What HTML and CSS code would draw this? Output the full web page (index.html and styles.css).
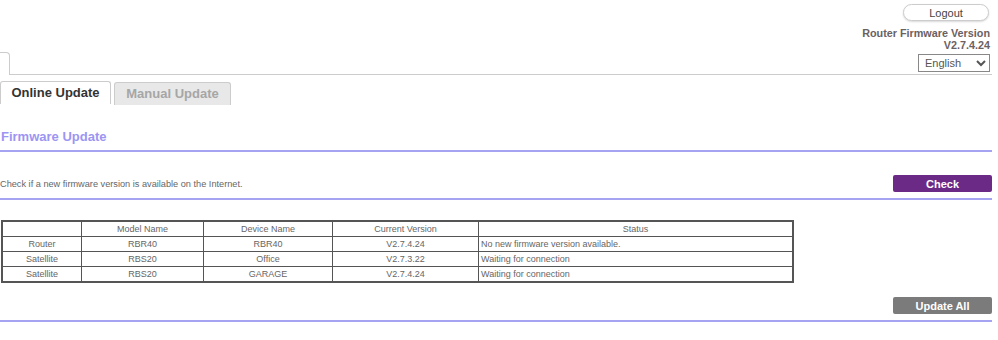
FILE: index.html
```html
<!DOCTYPE html>
<html lang="en">
<head>
  <meta charset="UTF-8">
  <title>Firmware Update</title>
  <link rel="stylesheet" href="styles.css">
</head>
<body>

  <div class="cabecera">
    <div class="info">
      <button class="logout">Logout</button>
      <div class="version">Router Firmware Version<br>V2.7.4.24</div>
    </div>
  </div>

  <div class="tira">
    <div class="pestana-izq"></div>
    <div class="tira-linea">
      <select class="idioma">
        <option>English</option>
      </select>
    </div>
  </div>

  <div class="pestanas">
    <div class="pestana activa">Online Update</div>
    <div class="pestana">Manual Update</div>
  </div>

  <h2 class="titulo">Firmware Update</h2>

  <div class="fila-check">
    <span>Check if a new firmware version is available on the Internet.</span>
    <button class="boton morado">Check</button>
  </div>

  <table class="tabla">
    <tr>
      <th class="c1"></th>
      <th class="c2">Model Name</th>
      <th class="c3">Device Name</th>
      <th class="c4">Current Version</th>
      <th class="c5">Status</th>
    </tr>
    <tr>
      <td>Router</td><td>RBR40</td><td>RBR40</td><td>V2.7.4.24</td>
      <td class="estado">No new firmware version available.</td>
    </tr>
    <tr>
      <td>Satellite</td><td>RBS20</td><td>Office</td><td>V2.7.3.22</td>
      <td class="estado">Waiting for connection</td>
    </tr>
    <tr>
      <td>Satellite</td><td>RBS20</td><td>GARAGE</td><td>V2.7.4.24</td>
      <td class="estado">Waiting for connection</td>
    </tr>
  </table>

  <div class="fila-update">
    <button class="boton gris">Update All</button>
  </div>

</body>
</html>
```

FILE: styles.css
```css
body {
  margin: 0;
  width: 992px;
  font-family: 'Liberation Sans', Arial, sans-serif;
  color: #666;
  background: white;
}

.cabecera {
  display: flex;
  justify-content: flex-end;
  padding-top: 4px;
}

.info {
  display: flex;
  flex-direction: column;
  align-items: flex-end;
  padding-right: 2px;
}

.logout {
  width: 86px;
  height: 17px;
  margin-right: 1px;
  padding: 0;
  font-family: inherit;
  font-size: 11px;
  color: #444;
  background: white;
  border: 1px solid #ccc;
  border-radius: 9px;
  box-shadow: 0 1px 2px rgba(0,0,0,0.15);
}

.version {
  margin-top: 6px;
  text-align: right;
  font-size: 10.8px;
  font-weight: bold;
  line-height: 12px;
  color: #6b6161;
}

.tira {
  display: flex;
  margin-top: 1px;
  width: 998px;
}

.pestana-izq {
  width: 10px;
  height: 23px;
  box-sizing: border-box;
  border-top: 1px solid #ccc;
  border-right: 1px solid #ccc;
  border-top-right-radius: 4px;
}

.tira-linea {
  flex: 1;
  display: flex;
  justify-content: flex-end;
  align-items: flex-start;
  border-bottom: 1px solid #ccc;
  padding-right: 8px;
}

.idioma {
  width: 72px;
  height: 18px;
  margin-top: 2px;
  font-family: inherit;
  font-size: 11px;
  color: #555;
  background: white;
  border: 1px solid #888;
  border-radius: 0;
  padding: 0 2px;
}

.pestanas {
  display: flex;
  gap: 3px;
  margin-top: 6px;
}

.pestana {
  box-sizing: border-box;
  width: 117px;
  height: 23px;
  margin-top: 1px;
  line-height: 22px;
  text-align: center;
  font-size: 13px;
  font-weight: bold;
  color: #a6a6a6;
  background: #e8e8e8;
  border: 1px solid #ccc;
  border-bottom: none;
  border-radius: 3px 3px 0 0;
}

.pestana.activa {
  width: 111px;
  margin-top: 0;
  color: #333;
  background: white;
}

.titulo {
  margin: 24px 0 0 0;
  padding: 0 0 5px 1px;
  font-size: 13px;
  font-weight: bold;
  line-height: 16px;
  color: #9c95f3;
  border-bottom: 2px solid #a7a3f3;
}

.fila-check {
  display: flex;
  justify-content: space-between;
  align-items: center;
  margin-top: 23px;
  padding-bottom: 6px;
  font-size: 9.2px;
  border-bottom: 2px solid #a7a3f3;
}

.boton {
  width: 99px;
  height: 17px;
  padding: 0;
  font-family: inherit;
  font-size: 11px;
  font-weight: bold;
  color: white;
  border: none;
  border-radius: 2px;
}

.morado {
  background: #6c2a87;
}

.gris {
  background: #7b7b7b;
}

.tabla {
  margin: 20px 0 0 1px;
  width: 793px;
  border-collapse: collapse;
  border: 2px solid #555;
  font-size: 9px;
}

.tabla th,
.tabla td {
  height: 14px;
  padding: 0 2px;
  border: 1px solid #555;
  font-weight: normal;
  text-align: center;
  color: #666;
}

.tabla td.estado {
  text-align: left;
}

.c1 { width: 74px; }
.c2 { width: 117px; }
.c3 { width: 124px; }
.c4 { width: 141px; }

.fila-update {
  display: flex;
  justify-content: flex-end;
  margin-top: 14px;
  padding-bottom: 6px;
  border-bottom: 2px solid #a7a3f3;
}
```
